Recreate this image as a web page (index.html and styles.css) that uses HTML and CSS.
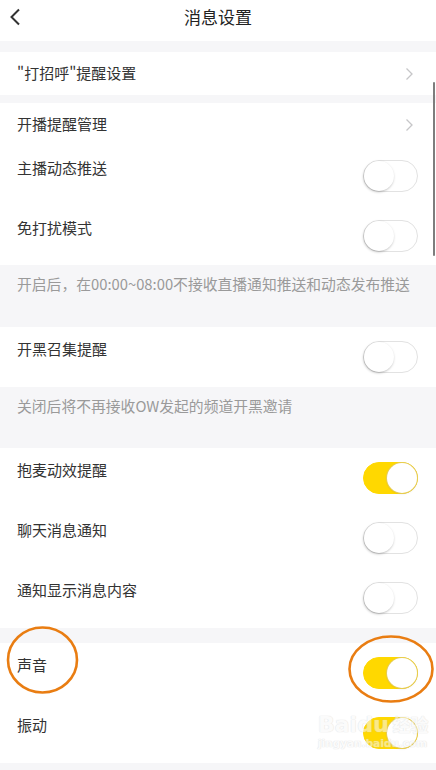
FILE: index.html
```html
<!DOCTYPE html>
<html lang="zh">
<head>
<meta charset="utf-8">
<title>消息设置</title>
<link rel="stylesheet" href="styles.css">
</head>
<body>
<div class="page">
  <header class="nav">
    <svg class="back" width="14" height="18" viewBox="0 0 14 18"><path d="M11 1.5 L3.5 9 L11 16.5" fill="none" stroke="#333" stroke-width="2"/></svg>
    <div class="title">消息设置</div>
  </header>
  <div class="gap g11"></div>
  <section class="group">
    <div class="row link"><span class="label">"打招呼"提醒设置</span><svg class="chev" width="9" height="14" viewBox="0 0 9 14"><path d="M1.5 1.5 L7 7 L1.5 12.5" fill="none" stroke="#c6c6c8" stroke-width="1.3"/></svg></div>
  </section>
  <div class="gap g8"></div>
  <section class="group">
    <div class="row link"><span class="label">开播提醒管理</span><svg class="chev" width="9" height="14" viewBox="0 0 9 14"><path d="M1.5 1.5 L7 7 L1.5 12.5" fill="none" stroke="#c6c6c8" stroke-width="1.3"/></svg></div>
    <div class="row sw"><span class="label">主播动态推送</span><span class="toggle"><span class="knob"></span></span></div>
    <div class="row sw short"><span class="label">免打扰模式</span><span class="toggle"><span class="knob"></span></span></div>
  </section>
  <div class="note n62">开启后，在00:00~08:00不接收直播通知推送和动态发布推送</div>
  <section class="group">
    <div class="row sw"><span class="label">开黑召集提醒</span><span class="toggle"><span class="knob"></span></span></div>
  </section>
  <div class="note n61">关闭后将不再接收OW发起的频道开黑邀请</div>
  <section class="group">
    <div class="row sw"><span class="label">抱麦动效提醒</span><span class="toggle on"><span class="knob"></span></span></div>
    <div class="row sw"><span class="label">聊天消息通知</span><span class="toggle"><span class="knob"></span></span></div>
    <div class="row sw"><span class="label">通知显示消息内容</span><span class="toggle"><span class="knob"></span></span></div>
  </section>
  <div class="gap g15"></div>
  <section class="group">
    <div class="row sw"><span class="label">声音</span><span class="toggle on"><span class="knob"></span></span></div>
    <div class="row sw"><span class="label">振动</span><span class="toggle on"><span class="knob"></span></span></div>
  </section>
  <div class="gap g20"></div>

  <div class="scrollbar"></div>
  <svg class="mark" width="436" height="770" viewBox="0 0 436 770">
    <ellipse cx="42.5" cy="660" rx="34.5" ry="32.5" fill="none" stroke="#e97d12" stroke-width="2.6"/>
    <ellipse cx="391" cy="669" rx="41.5" ry="32.5" fill="none" stroke="#e97d12" stroke-width="2.6"/>
  </svg>
  <div class="watermark"><span class="wm-main">Baidu<span class="wm-cn">经验</span></span><span class="wm-url">jingyan.baidu.com</span></div>
</div>
</body>
</html>
```
FILE: styles.css
```css
html, body {
  margin: 0;
  padding: 0;
  background: #f6f6f8;
}
body {
  font-family: "Noto Sans CJK SC", "Noto Sans", sans-serif;
  color: #333;
}
.page {
  width: 436px;
  height: 770px;
  overflow: hidden;
  position: relative;
  background: #f6f6f8;
}
.nav {
  height: 41px;
  background: #fff;
  display: flex;
  align-items: center;
  justify-content: center;
  position: relative;
}
.back {
  position: absolute;
  left: 8px;
  top: 8px;
}
.title {
  font-size: 17px;
  color: #222;
  line-height: 20px;
  margin-top: -8px;
}
.gap { background: #f6f6f8; }
.g11 { height: 11px; }
.g8 { height: 8px; }
.g15 { height: 15px; }
.g20 { height: 20px; }
.group { background: #fff; }
.row {
  display: flex;
  justify-content: space-between;
  padding: 0 18px 0 17px;
  box-sizing: border-box;
}
.label {
  font-size: 15px;
  line-height: 20px;
  color: #333;
}
.row.link {
  height: 43px;
  align-items: center;
}
.row.link .label { margin-top: -1px; }
.chev { margin-right: 4px; }
.row.sw {
  height: 60px;
  align-items: flex-start;
}
.row.sw.short { height: 59px; }
.row.sw .label { padding-top: 12px; }
.toggle {
  margin-top: 14px;
  width: 55px;
  height: 32px;
  box-sizing: border-box;
  border-radius: 16px;
  border: 1px solid #e2e2e2;
  background: #fff;
  position: relative;
  display: block;
}
.knob {
  position: absolute;
  top: 0;
  left: 0;
  width: 30px;
  height: 30px;
  border-radius: 50%;
  background: #fff;
  box-shadow: -0.5px 1px 2.5px rgba(0,0,0,0.28);
}
.toggle.on {
  background: #ffd800;
  border-color: #ffd800;
}
.toggle.on .knob {
  left: auto;
  right: 0;
  box-shadow: 0 0 0 1px #e6cc55, 0 1px 2px rgba(0,0,0,0.12);
}
.note {
  box-sizing: border-box;
  padding: 9px 17px 0;
  font-size: 14.8px;
  line-height: 20px;
  color: #9a9a9a;
}
.n62 { height: 62px; }
.n61 { height: 61px; }
.scrollbar {
  position: absolute;
  left: 433px;
  top: 82px;
  width: 2px;
  height: 174px;
  background: #7d7d7d;
  border-radius: 1px;
}
.mark {
  position: absolute;
  left: 0;
  top: 0;
  pointer-events: none;
}
.watermark {
  position: absolute;
  left: 318px;
  top: 712px;
  display: flex;
  flex-direction: column;
  align-items: flex-start;
  opacity: 0.55;
  pointer-events: none;
}
.wm-main {
  font-family: "DejaVu Sans", sans-serif;
  font-weight: bold;
  font-size: 22px;
  line-height: 24px;
  color: rgba(255,255,255,0.9);
  text-shadow: 0 0 1px #ccc, 0 0 1px #ccc;
}
.wm-cn {
  font-family: "Noto Sans CJK SC", sans-serif;
  font-size: 18px;
  margin-left: 4px;
}
.wm-url {
  font-family: "DejaVu Sans", sans-serif;
  font-weight: bold;
  font-size: 10.5px;
  line-height: 13px;
  color: rgba(255,255,255,0.9);
  text-shadow: 0 0 1px #ccc, 0 0 1px #ccc;
}
```
